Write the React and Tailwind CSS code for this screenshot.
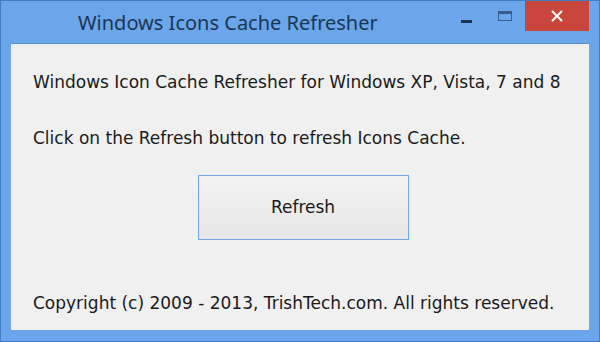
export default function App() {
  return (
    <div className="w-[600px] h-[342px] bg-[#6ba6ea] border border-[#3f7cc4] flex flex-col overflow-hidden">
      <div className="h-[42px] flex items-start relative">
        <div className="pl-[77px] pt-[9px] text-[20px] leading-[26px] text-[#1c3553] font-['Noto_Sans',sans-serif]">
          Windows Icons Cache Refresher
        </div>
        <div className="ml-auto flex items-start">
          <div className="w-[36px] h-[30px] flex items-center justify-center">
            <div className="w-[11px] h-[3px] bg-[#1c3553] mt-[10px]" />
          </div>
          <div className="w-[36px] h-[30px] flex items-center justify-center mr-[5px] pl-[6px]">
            <div className="w-[14px] h-[10px] border border-[#3b5f8a] border-t-[3px]" />
          </div>
          <div className="w-[64px] h-[30px] bg-[#c9463d] flex items-center justify-center mr-[10px]">
            <svg width="12" height="12" viewBox="0 0 12 12">
              <path d="M1.5 1.5 L10.5 10.5 M10.5 1.5 L1.5 10.5" stroke="#ffffff" strokeWidth="2" strokeLinecap="round" />
            </svg>
          </div>
        </div>
      </div>
      <div className="flex-1 mx-[10px] mb-[11px] bg-[#f0f0f0] border-t border-[#5a8fcf] flex flex-col text-[#1a1a1a] font-['DejaVu_Sans',sans-serif] text-[17px]">
        <div className="pl-[22px] pt-[28px] leading-[20px]">Windows Icon Cache Refresher for Windows XP, Vista, 7 and 8</div>
        <div className="pl-[22px] pt-[36px] leading-[20px]">Click on the Refresh button to refresh Icons Cache.</div>
        <div className="flex justify-center pt-[27px] pl-[6px]">
          <div className="w-[211px] h-[65px] border border-[#6fa8e6] bg-gradient-to-b from-[#f2f2f2] to-[#e6e6e6] flex items-center justify-center">
            Refresh
          </div>
        </div>
        <div className="pl-[22px] mt-auto pb-[17px] leading-[20px]">Copyright (c) 2009 - 2013, TrishTech.com. All rights reserved.</div>
      </div>
    </div>
  );
}
